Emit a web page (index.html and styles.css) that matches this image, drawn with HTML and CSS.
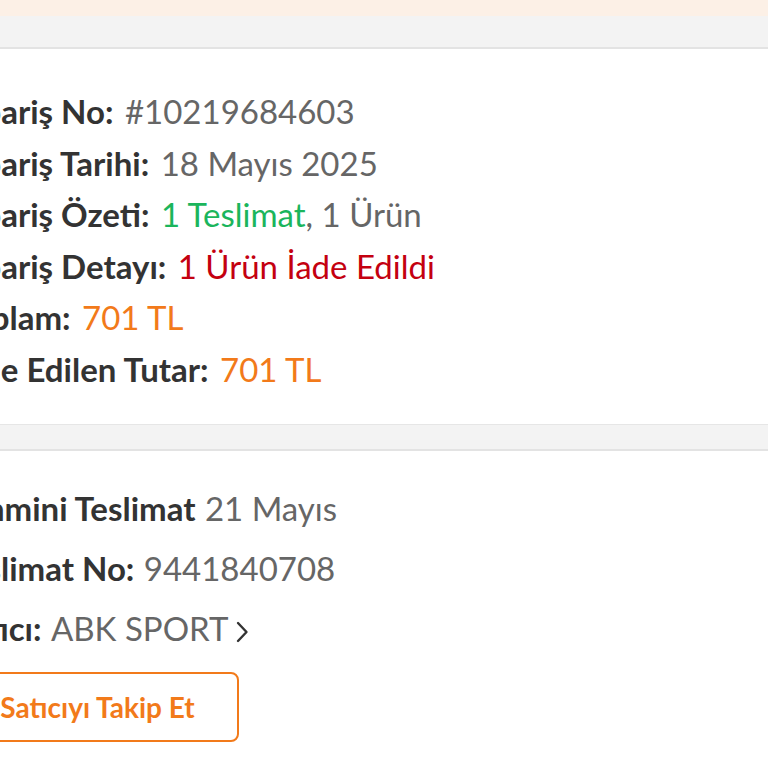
FILE: index.html
```html
<!DOCTYPE html>
<html lang="tr">
<head>
<meta charset="utf-8">
<title>Sipariş Detayı</title>
<link rel="stylesheet" href="styles.css">
</head>
<body>
<div class="banner"></div>
<div class="gap gap-top"></div>
<section class="card summary">
  <div class="rows">
    <div class="row"><span class="label">Sipariş No:</span> <span class="value">#10219684603</span></div>
    <div class="row"><span class="label">Sipariş Tarihi:</span> <span class="value">18 Mayıs 2025</span></div>
    <div class="row"><span class="label">Sipariş Özeti:</span> <span class="value"><span class="green">1 Teslimat</span>, 1 Ürün</span></div>
    <div class="row"><span class="label">Sipariş Detayı:</span> <span class="value red">1 Ürün İade Edildi</span></div>
    <div class="row"><span class="label">Toplam:</span> <span class="value orange">701 TL</span></div>
    <div class="row"><span class="label">İade Edilen Tutar:</span> <span class="value orange">701 TL</span></div>
  </div>
</section>
<div class="gap gap-mid"></div>
<section class="card delivery">
  <div class="rows">
    <div class="row tall"><span class="label">Tahmini Teslimat</span> <span class="value">21 Mayıs</span></div>
    <div class="row tall"><span class="label">Teslimat No:</span> <span class="value">9441840708</span></div>
    <div class="row tall"><span class="label">Satıcı:</span> <span class="value">ABK SPORT</span><svg class="chev" width="14" height="22" viewBox="0 0 14 22"><path d="M3 2 L11.5 11 L3 20" fill="none" stroke="#333" stroke-width="2.4" stroke-linecap="round" stroke-linejoin="round"/></svg></div>
    <button class="follow">Satıcıyı Takip Et</button>
  </div>
</section>
</body>
</html>
```
FILE: styles.css
```css
html, body {
  margin: 0;
  padding: 0;
  background: #ffffff;
  overflow: hidden;
}
body {
  font-family: "Lato", "Open Sans", sans-serif;
  color: #333333;
}
.banner {
  height: 16px;
  background: #fcf0e6;
}
.gap {
  background: #f3f3f3;
}
.gap-top {
  height: 31px;
  border-bottom: 2px solid #e3e3e3;
}
.gap-mid {
  height: 24px;
  border-top: 1px solid #e6e6e6;
  border-bottom: 2px solid #e3e3e3;
}
.card {
  background: #ffffff;
}
.summary {
  padding: 37px 0 28px;
}
.summary .rows {
  margin-left: -44px;
}
.summary .value {
  margin-left: 3px;
}
.delivery {
  padding: 27px 0 25px;
}
.delivery .rows {
  margin-left: -47px;
}
.delivery .value {
  margin-left: 1px;
}
.row {
  font-size: 33px;
  line-height: 51.6px;
  white-space: nowrap;
}
.row.tall {
  line-height: 60px;
}
.label {
  font-weight: 700;
  color: #333333;
}
.value {
  color: #666666;
}
.green { color: #1bb55c; }
.red { color: #c40010; }
.orange { color: #f27a1a; }
.chev {
  margin-left: 7px;
  vertical-align: -2px;
}
.follow {
  margin-top: 14px;
  margin-left: 3px;
  width: 283px;
  height: 70px;
  border: 2px solid #f27a1a;
  border-radius: 8px;
  background: #ffffff;
  color: #f27a1a;
  font-family: "Lato", sans-serif;
  font-weight: 700;
  font-size: 28px;
  padding: 0;
  display: block;
}
```
